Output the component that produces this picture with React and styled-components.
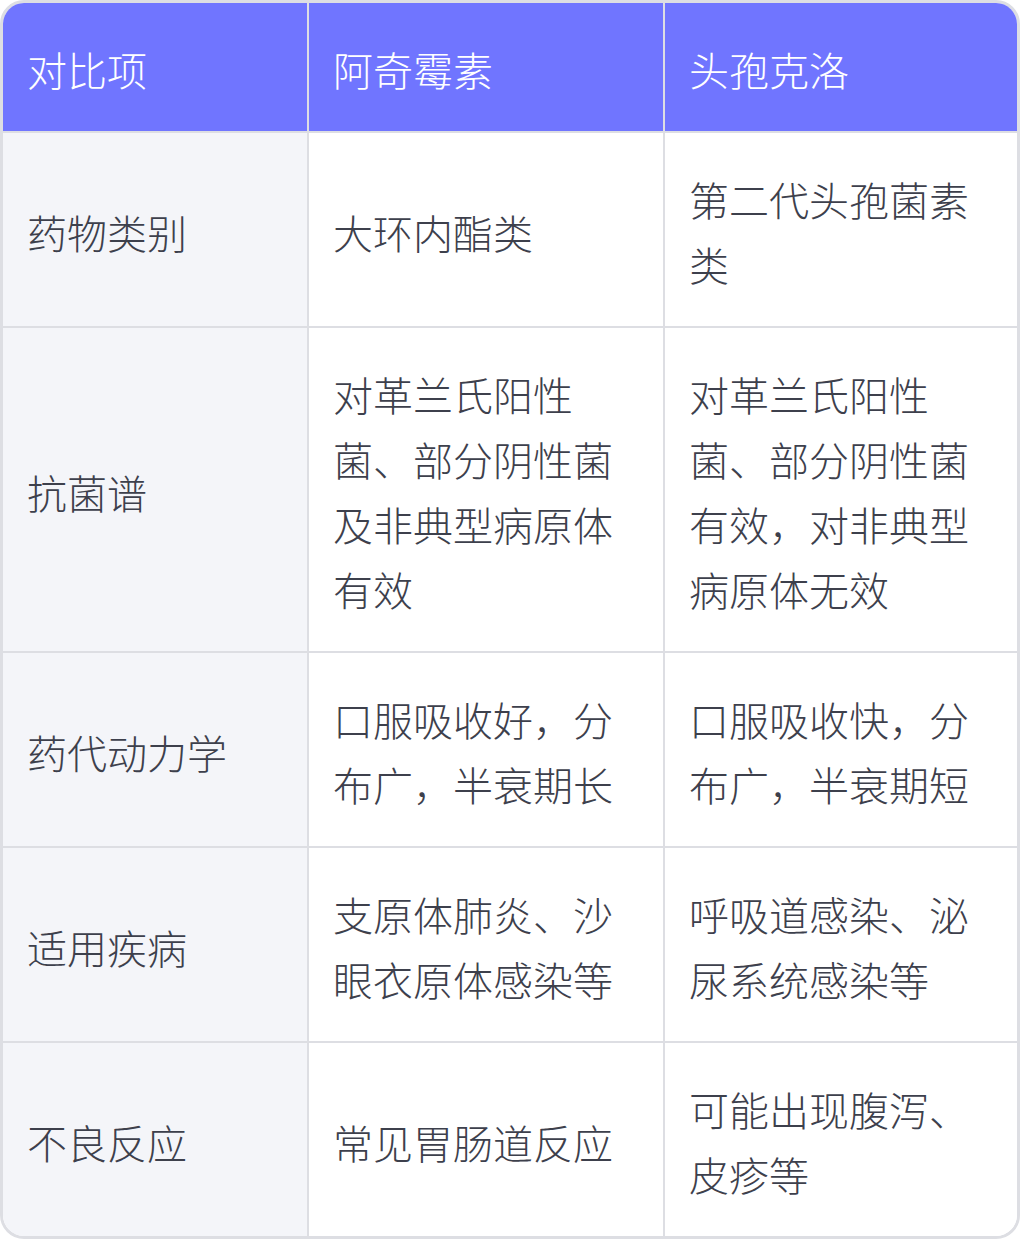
import styled, { createGlobalStyle } from 'styled-components';

const rows = [
  ['药物类别', '大环内酯类', '第二代头孢菌素类'],
  [
    '抗菌谱',
    '对革兰氏阳性菌、部分阴性菌及非典型病原体有效',
    '对革兰氏阳性菌、部分阴性菌有效，对非典型病原体无效',
  ],
  ['药代动力学', '口服吸收好，分布广，半衰期长', '口服吸收快，分布广，半衰期短'],
  ['适用疾病', '支原体肺炎、沙眼衣原体感染等', '呼吸道感染、泌尿系统感染等'],
  ['不良反应', '常见胃肠道反应', '可能出现腹泻、皮疹等'],
];

export default function App() {
  return (
    <>
      <GlobalStyle />
      <TableWrapper>
        <Table>
          <colgroup>
            <col style={{ width: 306 }} />
            <col style={{ width: 356 }} />
            <col />
          </colgroup>
          <thead>
            <tr>
              <HeadCell>对比项</HeadCell>
              <HeadCell>阿奇霉素</HeadCell>
              <HeadCell>头孢克洛</HeadCell>
            </tr>
          </thead>
          <tbody>
            {rows.map(([label, a, b]) => (
              <tr key={label}>
                <Cell $label>{label}</Cell>
                <Cell>{a}</Cell>
                <Cell>{b}</Cell>
              </tr>
            ))}
          </tbody>
        </Table>
      </TableWrapper>
    </>
  );
}

const GlobalStyle = createGlobalStyle`
  html, body {
    margin: 0;
    padding: 0;
    background: #ffffff;
  }

  body {
    font-family: "Noto Sans CJK SC", "Noto Sans", sans-serif;
  }
`;

const TableWrapper = styled.div`
  width: 1020px;
  box-sizing: border-box;
  border: 3px solid #dddee3;
  border-radius: 24px;
  overflow: hidden;
`;

const Table = styled.table`
  width: 100%;
  table-layout: fixed;
  border-collapse: separate;
  border-spacing: 0;
`;

const HeadCell = styled.th`
  padding: 34px 24px 29px;
  background: #7075ff;
  color: #ffffff;
  font-size: 40px;
  font-weight: 300;
  line-height: 65px;
  text-align: left;
  border-right: 2px solid #dddee3;
  border-bottom: 2px solid #dddee3;

  &:last-child {
    border-right: none;
  }
`;

const Cell = styled.td`
  padding: 34px 24px 29px;
  background: ${(p) => (p.$label ? '#f4f5f9' : '#ffffff')};
  color: #3d404c;
  font-size: 40px;
  font-weight: 300;
  line-height: 65px;
  vertical-align: middle;
  border-right: 2px solid #dddee3;
  border-bottom: 2px solid #dddee3;

  &:last-child {
    border-right: none;
  }

  tr:last-child > & {
    border-bottom: none;
  }
`;
